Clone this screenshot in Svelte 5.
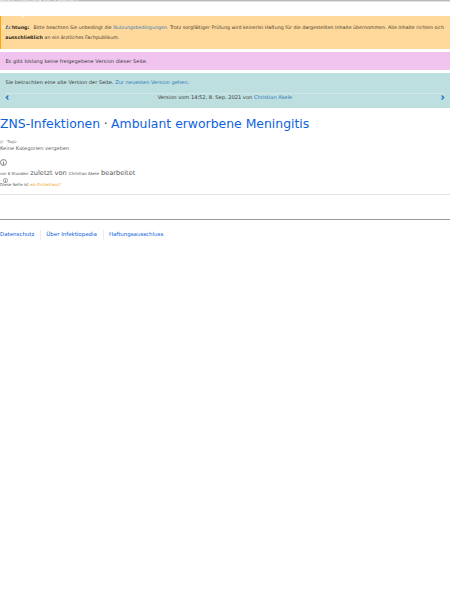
<script>
  const footerLinks = ['Datenschutz', 'Über Infektiopedia', 'Haftungsausschluss'];
</script>

<div class="page">
  <header class="topbar"><span>Letzte Änderung vor 6 Stunden</span></header>
  <div class="ghost upper">g</div>
  <div class="ghost">Das</div>

  <section class="notice warning">
    <p><b>Achtung:</b><span class="gap"></span>Bitte beachten Sie unbedingt die <a href="#terms">Nutzungsbedingungen</a>. Trotz sorgfältiger Prüfung wird keinerlei Haftung für die dargestellten Inhalte übernommen. Alle Inhalte richten sich</p>
    <p><b>ausschließlich</b> an ein ärztliches Fachpublikum.</p>
  </section>

  <section class="notice unreleased">Es gibt bislang keine freigegebene Version dieser Seite.</section>

  <section class="notice version">
    <p>Sie betrachten eine alte Version der Seite. <a href="#latest">Zur neuesten Version gehen</a>.</p>
    <nav>
      <svg viewBox="0 0 4 5"><path d="M3.4 .5 1.3 2.5l2.1 2" /></svg>
      <span>Version vom 14:52, 8. Sep. 2021 von <a href="#user">Christian Akele</a></span>
      <svg viewBox="0 0 4 5"><path d="M.6 .5 2.7 2.5.6 4.5" /></svg>
    </nav>
  </section>

  <h1><a href="#parent">ZNS-Infektionen</a><span class="dot">·</span><a href="#page">Ambulant erworbene Meningitis</a></h1>

  <div class="tags">
    <svg viewBox="0 0 5 4"><path d="M.3 1.2V3.1L2.4 3.2 4.1 1.6 3.1.5 1.5.6Z" /></svg>
    <span>Tags:</span>
  </div>
  <div class="categories">Keine Kategorien vergeben</div>

  <svg class="info" viewBox="0 0 14 14"><circle cx="7" cy="7" r="6" /><path d="M7 3.2v1.3M5.8 6.2H7v4M5.5 10.3h3" /></svg>
  <div class="edited"><small>vor 6 Stunden</small> zuletzt von <small>Christian Akele</small> bearbeitet</div>
  <div class="status">
    <svg viewBox="0 0 14 14"><circle cx="7" cy="7" r="6" /><path d="M7 3.2v1.3M5.8 6.2H7v4M5.5 10.3h3" /></svg>
    Diese Seite ist <span>ein Erstentwurf</span>
  </div>

  <div class="rules"></div>
  <footer>
    {#each footerLinks as label}
      <a href="#footer">{label}</a>
    {/each}
  </footer>
</div>

<style>
  :global(body) { margin: 0; background: #fff; }
  .page {
    position: relative;
    width: 450px;
    height: 600px;
    overflow: hidden;
    font: 5.12px/8px "DejaVu Sans", sans-serif;
    color: #3c3c3c;
    white-space: nowrap;
  }
  p, h1 { margin: 0; font-weight: 400; }
  a { color: #337ab7; text-decoration: none; }
  svg { fill: none; stroke: currentColor; }
  .topbar {
    height: 1px;
    margin-bottom: 14px;
    overflow: hidden;
    background: #b8b8b8;
    border-bottom: 1px solid #e4e4e4;
    color: #fff;
    font-size: 5px;
  }
  .topbar span { display: block; margin-top: -5px; }
  .ghost {
    position: absolute;
    left: 2px;
    top: 23px;
    z-index: 1;
    color: rgba(255, 255, 255, .8);
    font-size: 5.5px;
  }
  .ghost.upper { left: 21px; top: 11px; }
  .notice { box-sizing: border-box; padding: 0 5.4px; }
  .warning {
    height: 33px;
    padding: 7px 5px 0 4.2px;
    border-left: 1.4px solid #ffa500;
    background: #ffd99b;
    font-size: 4.765px;
    line-height: 9.8px;
    color: #463d2f;
  }
  .warning b { color: #30291e; }
  .gap { display: inline-block; width: 4px; }
  .unreleased {
    height: 18px;
    margin-top: 3px;
    background: #f0c4ee;
    line-height: 18px;
  }
  .version {
    height: 34.5px;
    margin-top: 3px;
    padding-top: 4.7px;
    background: #bddfe0;
  }
  nav {
    display: flex;
    justify-content: space-between;
    align-items: center;
    margin-top: 7.3px;
    border-top: 1px solid #d4e7e8;
    line-height: 7px;
  }
  nav svg { width: 4px; height: 5px; color: #2277bd; stroke-width: 1.3; }
  h1 { margin-top: 8.5px; font-size: 12.42px; line-height: 16px; }
  h1 a, footer a { color: #0b63dc; }
  .dot { display: inline-block; width: 11px; text-align: center; }
  .tags {
    display: flex;
    align-items: center;
    gap: 3px;
    height: 6px;
    margin-top: 6.7px;
    font-size: 4px;
    color: #777;
  }
  .tags svg { width: 4px; height: 4px; stroke-width: .5; }
  .categories { margin-top: -1px; color: #666; }
  .info { display: block; width: 7px; height: 7px; margin-top: 7px; color: #444; stroke-width: 1.2; }
  .edited { margin-top: 3px; font-size: 6.6px; color: #555; }
  small { font-size: 4px; }
  .status { position: relative; margin-top: 2.9px; font-size: 4px; color: #555; }
  .status svg { position: absolute; left: 3px; top: -3px; width: 5px; height: 5px; stroke-width: 1.4; }
  .status span { color: #f0a010; }
  .rules {
    height: 24px;
    margin-top: 5px;
    border-top: 1px solid #e3e3e3;
    border-bottom: 1px solid #999;
  }
  footer {
    display: flex;
    margin-top: 10.5px;
    font-size: 5.48px;
    line-height: 8px;
  }
  footer a {
    height: 10px;
    margin-right: 5px;
    padding-right: 6px;
    border-right: 1px solid #eee;
  }
  footer a:last-child { border: 0; }
</style>
